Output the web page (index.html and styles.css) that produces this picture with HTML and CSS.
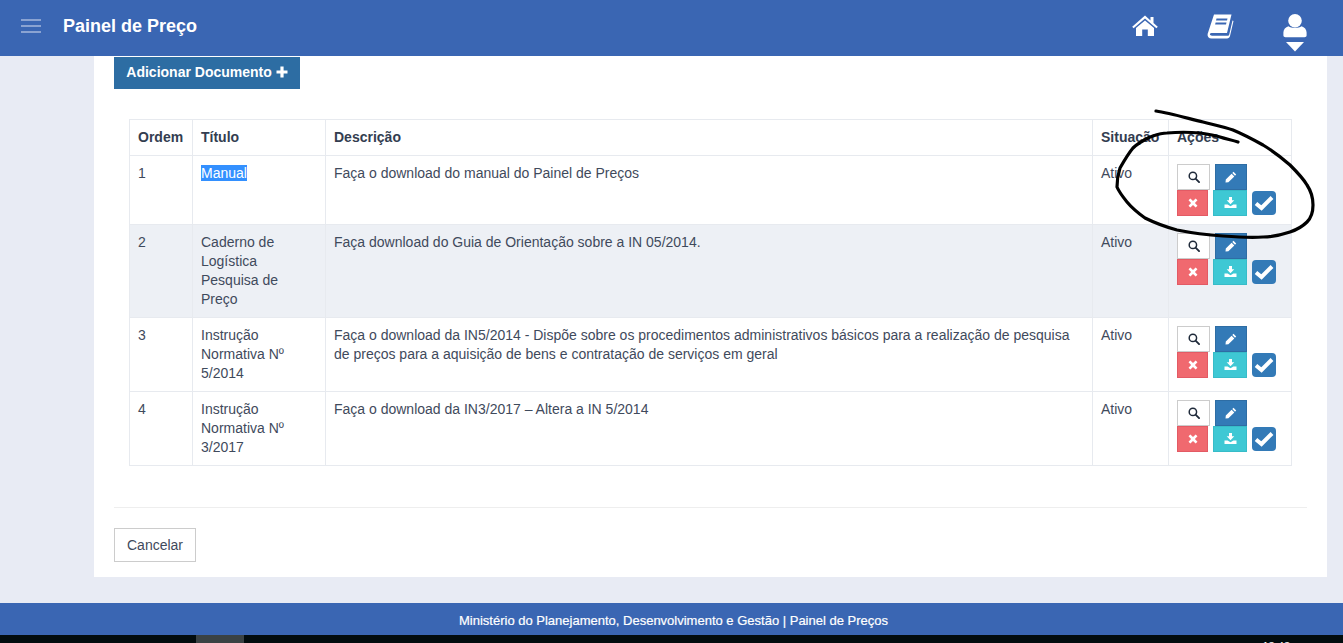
FILE: index.html
```html
<!DOCTYPE html>
<html lang="pt-BR">
<head>
<meta charset="utf-8">
<title>Painel de Preço</title>
<link rel="stylesheet" href="styles.css">
</head>
<body>
<header class="topbar">
  <button class="burger" aria-label="Menu"><i></i><i></i><i></i></button>
  <h1 class="brand">Painel de Preço</h1>
  <nav class="topnav">
    <a class="nav-home" href="#" aria-label="Início">
      <svg width="26" height="21" viewBox="0 0 26 21"><path fill="#fff" d="M13 0.5 L18.5 5.4 V2 H21.5 V8 L25.8 11.8 L24.4 13.3 L13 3.4 L1.6 13.3 L0.2 11.8 Z"/><path fill="#fff" d="M13 5.4 L22 13 V21 H15.8 V14.5 H10.2 V21 H4 V13 Z"/></svg>
    </a>
    <a class="nav-book" href="#" aria-label="Manual">
      <svg width="27" height="25" viewBox="0 0 27 25"><path fill="#fff" fill-rule="evenodd" d="M7 0.5 H24.5 L20 19 H4.5 C3 19 2.5 20.2 3.2 21 C3.7 21.6 4.4 21.7 5.2 21.7 H20.5 C21.5 21.7 22 21.2 22.3 20.2 L25.5 6.5 L26.5 7 L23 22 C22.6 23.6 21.6 24.5 20 24.5 H4.5 C1.8 24.5 0.2 22.6 0.6 20 Z M9.5 4.5 L9 6.5 H20 L20.5 4.5 Z M8.6 8.5 L8.1 10.5 H19 L19.5 8.5 Z"/></svg>
    </a>
    <a class="nav-user" href="#" aria-label="Usuário">
      <svg width="24" height="38" viewBox="0 0 24 38"><circle fill="#fff" cx="12" cy="6.8" r="6.8"/><path fill="#fff" d="M5.5 12.2 C8 14.4 16 14.4 18.5 12.2 C21.5 13 23.6 15.5 23.6 18.5 V21.5 C23.6 22.6 22.6 23.2 21.5 23.2 H2.5 C1.4 23.2 0.4 22.6 0.4 21.5 V18.5 C0.4 15.5 2.5 13 5.5 12.2 Z"/><path fill="#fff" d="M3 28 H21 L12 37.5 Z"/></svg>
    </a>
  </nav>
</header>

<main class="panel">
  <button class="btn-add">Adicionar Documento <svg class="plus" width="12" height="12" viewBox="0 0 12 12"><path fill="#fff" d="M4.4 0.5 H7.6 V4.4 H11.5 V7.6 H7.6 V11.5 H4.4 V7.6 H0.5 V4.4 H4.4 Z"/></svg></button>

  <div class="table-wrap">
    <table class="docs">
      <colgroup>
        <col class="c-ordem"><col class="c-titulo"><col class="c-desc"><col class="c-sit"><col class="c-acoes">
      </colgroup>
      <thead>
        <tr><th>Ordem</th><th>Título</th><th>Descrição</th><th>Situação</th><th>Ações</th></tr>
      </thead>
      <tbody>
        <tr>
          <td>1</td>
          <td><span class="selected">Manual</span></td>
          <td>Faça o download do manual do Painel de Preços</td>
          <td>Ativo</td>
          <td>
            <div class="actions">
              <div class="act-row">
                <button class="act act-view"><svg width="12" height="12" viewBox="0 0 13 13"><circle cx="5.3" cy="5.3" r="4" fill="none" stroke="#1f2a3a" stroke-width="1.6"/><path d="M8.2 8.2 L12 12" stroke="#1f2a3a" stroke-width="2" stroke-linecap="round"/></svg></button>
                <button class="act act-edit"><svg width="12" height="12" viewBox="0 0 12 12"><path fill="#fff" d="M8.5 0.8 L11.2 3.5 L10 4.7 L7.3 2 Z M6.6 2.7 L9.3 5.4 L3.4 11.2 L0.5 11.5 L0.8 8.6 Z"/></svg></button>
              </div>
              <div class="act-row">
                <button class="act act-del"><svg width="10" height="10" viewBox="0 0 11 11"><path fill="#fff" d="M2.6 0.6 L5.5 3.4 L8.4 0.6 L10.4 2.6 L7.6 5.5 L10.4 8.4 L8.4 10.4 L5.5 7.6 L2.6 10.4 L0.6 8.4 L3.4 5.5 L0.6 2.6 Z"/></svg></button>
                <button class="act act-down"><svg class="down-icon" width="13" height="11" viewBox="0 0 13 11"><path fill="#fff" d="M5 0 H8 V3.2 H10.3 L6.5 7.2 L2.7 3.2 H5 Z M0.5 7.6 H3.6 L6.5 9.2 L9.4 7.6 H12.5 V11 H0.5 Z"/></svg></button>
                <span class="check"><svg width="20" height="16" viewBox="0 0 20 16"><path fill="none" stroke="#fff" stroke-width="4" d="M2 8.5 L7.5 13 L18 2.5"/></svg></span>
              </div>
            </div>
          </td>
        </tr>
        <tr class="row-hover">
          <td>2</td>
          <td>Caderno de Logística Pesquisa de Preço</td>
          <td>Faça download do Guia de Orientação sobre a IN 05/2014.</td>
          <td>Ativo</td>
          <td>
            <div class="actions">
              <div class="act-row">
                <button class="act act-view"><svg width="12" height="12" viewBox="0 0 13 13"><circle cx="5.3" cy="5.3" r="4" fill="none" stroke="#1f2a3a" stroke-width="1.6"/><path d="M8.2 8.2 L12 12" stroke="#1f2a3a" stroke-width="2" stroke-linecap="round"/></svg></button>
                <button class="act act-edit"><svg width="12" height="12" viewBox="0 0 12 12"><path fill="#fff" d="M8.5 0.8 L11.2 3.5 L10 4.7 L7.3 2 Z M6.6 2.7 L9.3 5.4 L3.4 11.2 L0.5 11.5 L0.8 8.6 Z"/></svg></button>
              </div>
              <div class="act-row">
                <button class="act act-del"><svg width="10" height="10" viewBox="0 0 11 11"><path fill="#fff" d="M2.6 0.6 L5.5 3.4 L8.4 0.6 L10.4 2.6 L7.6 5.5 L10.4 8.4 L8.4 10.4 L5.5 7.6 L2.6 10.4 L0.6 8.4 L3.4 5.5 L0.6 2.6 Z"/></svg></button>
                <button class="act act-down"><svg class="down-icon" width="13" height="11" viewBox="0 0 13 11"><path fill="#fff" d="M5 0 H8 V3.2 H10.3 L6.5 7.2 L2.7 3.2 H5 Z M0.5 7.6 H3.6 L6.5 9.2 L9.4 7.6 H12.5 V11 H0.5 Z"/></svg></button>
                <span class="check"><svg width="20" height="16" viewBox="0 0 20 16"><path fill="none" stroke="#fff" stroke-width="4" d="M2 8.5 L7.5 13 L18 2.5"/></svg></span>
              </div>
            </div>
          </td>
        </tr>
        <tr>
          <td>3</td>
          <td>Instrução Normativa Nº 5/2014</td>
          <td>Faça o download da IN5/2014 - Dispõe sobre os procedimentos administrativos básicos para a realização de pesquisa de preços para a aquisição de bens e contratação de serviços em geral</td>
          <td>Ativo</td>
          <td>
            <div class="actions">
              <div class="act-row">
                <button class="act act-view"><svg width="12" height="12" viewBox="0 0 13 13"><circle cx="5.3" cy="5.3" r="4" fill="none" stroke="#1f2a3a" stroke-width="1.6"/><path d="M8.2 8.2 L12 12" stroke="#1f2a3a" stroke-width="2" stroke-linecap="round"/></svg></button>
                <button class="act act-edit"><svg width="12" height="12" viewBox="0 0 12 12"><path fill="#fff" d="M8.5 0.8 L11.2 3.5 L10 4.7 L7.3 2 Z M6.6 2.7 L9.3 5.4 L3.4 11.2 L0.5 11.5 L0.8 8.6 Z"/></svg></button>
              </div>
              <div class="act-row">
                <button class="act act-del"><svg width="10" height="10" viewBox="0 0 11 11"><path fill="#fff" d="M2.6 0.6 L5.5 3.4 L8.4 0.6 L10.4 2.6 L7.6 5.5 L10.4 8.4 L8.4 10.4 L5.5 7.6 L2.6 10.4 L0.6 8.4 L3.4 5.5 L0.6 2.6 Z"/></svg></button>
                <button class="act act-down"><svg class="down-icon" width="13" height="11" viewBox="0 0 13 11"><path fill="#fff" d="M5 0 H8 V3.2 H10.3 L6.5 7.2 L2.7 3.2 H5 Z M0.5 7.6 H3.6 L6.5 9.2 L9.4 7.6 H12.5 V11 H0.5 Z"/></svg></button>
                <span class="check"><svg width="20" height="16" viewBox="0 0 20 16"><path fill="none" stroke="#fff" stroke-width="4" d="M2 8.5 L7.5 13 L18 2.5"/></svg></span>
              </div>
            </div>
          </td>
        </tr>
        <tr>
          <td>4</td>
          <td>Instrução Normativa Nº 3/2017</td>
          <td>Faça o download da IN3/2017 – Altera a IN 5/2014</td>
          <td>Ativo</td>
          <td>
            <div class="actions">
              <div class="act-row">
                <button class="act act-view"><svg width="12" height="12" viewBox="0 0 13 13"><circle cx="5.3" cy="5.3" r="4" fill="none" stroke="#1f2a3a" stroke-width="1.6"/><path d="M8.2 8.2 L12 12" stroke="#1f2a3a" stroke-width="2" stroke-linecap="round"/></svg></button>
                <button class="act act-edit"><svg width="12" height="12" viewBox="0 0 12 12"><path fill="#fff" d="M8.5 0.8 L11.2 3.5 L10 4.7 L7.3 2 Z M6.6 2.7 L9.3 5.4 L3.4 11.2 L0.5 11.5 L0.8 8.6 Z"/></svg></button>
              </div>
              <div class="act-row">
                <button class="act act-del"><svg width="10" height="10" viewBox="0 0 11 11"><path fill="#fff" d="M2.6 0.6 L5.5 3.4 L8.4 0.6 L10.4 2.6 L7.6 5.5 L10.4 8.4 L8.4 10.4 L5.5 7.6 L2.6 10.4 L0.6 8.4 L3.4 5.5 L0.6 2.6 Z"/></svg></button>
                <button class="act act-down"><svg class="down-icon" width="13" height="11" viewBox="0 0 13 11"><path fill="#fff" d="M5 0 H8 V3.2 H10.3 L6.5 7.2 L2.7 3.2 H5 Z M0.5 7.6 H3.6 L6.5 9.2 L9.4 7.6 H12.5 V11 H0.5 Z"/></svg></button>
                <span class="check"><svg width="20" height="16" viewBox="0 0 20 16"><path fill="none" stroke="#fff" stroke-width="4" d="M2 8.5 L7.5 13 L18 2.5"/></svg></span>
              </div>
            </div>
          </td>
        </tr>
      </tbody>
    </table>
  </div>

  <hr class="rule">
  <button class="btn-cancel">Cancelar</button>
</main>

<footer class="footer">Ministério do Planejamento, Desenvolvimento e Gestão | Painel de Preços</footer>
<div class="taskbar"><span class="task-item"></span><span class="clock">13:43</span></div>

<svg class="scribble" width="1343" height="643" viewBox="0 0 1343 643"><path fill="none" stroke="#000" stroke-width="3.2" stroke-linecap="round" stroke-linejoin="round" d="M1156 111 C1170 113 1190 119 1203 122 C1215 125 1225 127 1233 130 C1245 135 1254 140 1263 145 C1273 151 1282 158 1290 165 C1297 172 1303 178 1307 185 C1311 191 1313 198 1313 205 C1313 212 1311 218 1307 222 C1302 227 1296 230 1290 232 C1281 235 1272 237 1263 237 C1250 238 1236 237 1223 236 C1208 235 1192 233 1177 230 C1166 227 1155 223 1145 218 C1138 213 1132 208 1127 202 C1123 197 1119 192 1117 187 C1117 180 1118 174 1120 168 C1124 161 1128 154 1133 148 C1138 143 1144 140 1150 137 C1156 135 1161 133 1167 133 C1178 132 1189 132 1200 133 C1207 134 1214 135 1220 137 C1226 139 1232 140 1238 142"/></svg>
</body>
</html>
```
FILE: styles.css
```css
* { box-sizing: border-box; }
html, body { margin: 0; height: 643px; overflow: hidden; }
body {
  position: relative;
  display: flex;
  flex-direction: column;
  background: #e8ebf4;
  font-family: "Liberation Sans", Arial, sans-serif;
  font-size: 14px;
  line-height: 19px;
  color: #3f4a5c;
}
button { font-family: inherit; cursor: pointer; }

.topbar {
  flex: none;
  height: 56px;
  display: flex;
  align-items: center;
  background: #3a66b3;
  color: #fff;
}
.burger {
  width: 20px;
  height: 14px;
  margin: 0 0 4px 21px;
  padding: 0;
  border: 0;
  background: none;
  display: flex;
  flex-direction: column;
  justify-content: space-between;
}
.burger i { display: block; height: 2px; background: #8aa3d2; }
.brand {
  margin: 0 0 4px 22px;
  font-size: 18px;
  line-height: 22px;
  font-weight: 700;
}
.topnav { margin-left: auto; display: flex; align-items: flex-start; height: 56px; }
.topnav a { display: block; line-height: 0; }
.nav-home { margin-top: 15px; }
.nav-book { margin: 14px 0 0 49px; }
.nav-user { margin: 14px 36px 0 49px; }

.panel {
  flex: none;
  width: 1233px;
  height: 521px;
  margin-left: 94px;
  padding: 1px 20px 0;
  background: #fff;
}
.btn-add {
  display: block;
  width: 186px;
  height: 32px;
  padding: 0 0 2px;
  border: 0;
  background: #2d6da3;
  color: #fff;
  font-size: 14px;
  font-weight: 700;
  line-height: 30px;
  text-align: center;
}
.plus { vertical-align: -1px; }

.table-wrap { padding: 30px 15px 0; }
.docs {
  width: 1162px;
  table-layout: fixed;
  border-collapse: collapse;
  border: 1px solid #e7eaef;
}
.c-ordem { width: 63px; }
.c-titulo { width: 133px; }
.c-desc { width: 767px; }
.c-sit { width: 76px; }
.c-acoes { width: 123px; }
.docs th, .docs td {
  padding: 8px;
  border: 1px solid #e7eaef;
  text-align: left;
  vertical-align: top;
}
.docs th { color: #333d50; font-weight: 700; white-space: nowrap; }
.docs .row-hover { background: #edf0f5; }
.selected { background: #3390ff; color: #fff; }

.actions { display: flex; flex-direction: column; }
.act-row { display: flex; gap: 5px; align-items: center; }
.act {
  height: 26px;
  padding: 0;
  display: flex;
  align-items: center;
  justify-content: center;
  border: 1px solid transparent;
}
.act-view { width: 33px; background: #fff; border-color: #ccc; }
.act-edit { width: 32px; background: #337ab7; border-color: #2e6da4; }
.act-del { width: 31px; background: #f0696f; border-color: #e35a64; }
.act-down { width: 34px; background: #3ec8d4; border-color: #37bcc8; }
.down-icon { margin-bottom: 2px; }
.check {
  width: 24px;
  height: 24px;
  display: flex;
  align-items: center;
  justify-content: center;
  border-radius: 4px;
  background: #337ab7;
}

.rule { margin: 41px 0 20px; border: 0; border-top: 1px solid #eee; }
.btn-cancel {
  display: block;
  width: 82px;
  height: 34px;
  padding: 0;
  border: 1px solid #ccc;
  background: #fff;
  color: #3f4a5c;
  font-size: 14px;
}

.footer {
  flex: none;
  height: 32px;
  margin-top: 26px;
  padding-left: 4px;
  background: #3a66b3;
  color: #fff;
  font-size: 13px;
  font-weight: 400;
  line-height: 36px;
  text-align: center;
  -webkit-text-stroke: 0.2px #fff;
}
.taskbar {
  flex: none;
  height: 8px;
  display: flex;
  overflow: hidden;
  background: #020c0e;
}
.task-item { width: 48px; margin-left: 196px; background: #3a4244; }
.clock {
  margin-left: auto;
  margin-right: 53px;
  padding-top: 5px;
  color: #fff;
  font-size: 11px;
  line-height: 13px;
}
.scribble { position: absolute; left: 0; top: 0; pointer-events: none; }
```
